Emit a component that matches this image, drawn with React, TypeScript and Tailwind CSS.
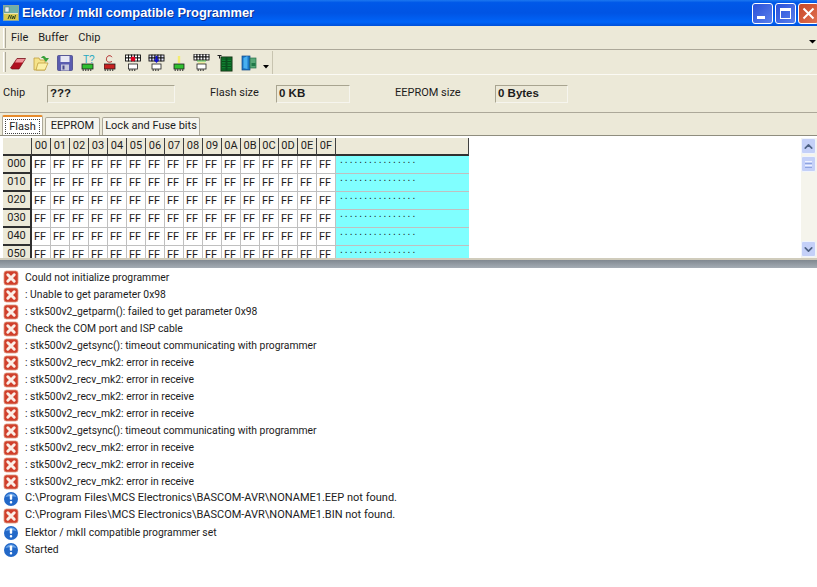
import React from 'react';
import { ChevronUp, ChevronDown } from 'lucide-react';

const hexCols = ['00','01','02','03','04','05','06','07','08','09','0A','0B','0C','0D','0E','0F'];
const rowLabels = ['000','010','020','030','040','050'];

const logLines: [string, string][] = [
  ['err', 'Could not initialize programmer'],
  ['err', ': Unable to get parameter 0x98'],
  ['err', ': stk500v2_getparm(): failed to get parameter 0x98'],
  ['err', 'Check the COM port and ISP cable'],
  ['err', ': stk500v2_getsync(): timeout communicating with programmer'],
  ['err', ': stk500v2_recv_mk2: error in receive'],
  ['err', ': stk500v2_recv_mk2: error in receive'],
  ['err', ': stk500v2_recv_mk2: error in receive'],
  ['err', ': stk500v2_recv_mk2: error in receive'],
  ['err', ': stk500v2_getsync(): timeout communicating with programmer'],
  ['err', ': stk500v2_recv_mk2: error in receive'],
  ['err', ': stk500v2_recv_mk2: error in receive'],
  ['err', ': stk500v2_recv_mk2: error in receive'],
  ['info', 'C:\\Program Files\\MCS Electronics\\BASCOM-AVR\\NONAME1.EEP not found.'],
  ['err', 'C:\\Program Files\\MCS Electronics\\BASCOM-AVR\\NONAME1.BIN not found.'],
  ['info', 'Elektor / mkII compatible programmer set'],
  ['info', 'Started'],
];

function ErrIcon() {
  return (
    <svg width="16" height="16" viewBox="0 0 16 16" className="shrink-0">
      <rect x="1" y="1" width="14" height="14" rx="2.5" fill="#d0402c" />
      <rect x="1" y="1" width="14" height="14" rx="2.5" fill="none" stroke="#e09a80" strokeWidth="0.8" />
      <path d="M4.8 4.8l6.4 6.4M11.2 4.8l-6.4 6.4" stroke="#fbeee6" strokeWidth="3" strokeLinecap="round" />
    </svg>
  );
}

function InfoIcon() {
  return (
    <svg width="16" height="16" viewBox="0 0 16 16" className="shrink-0">
      <circle cx="8" cy="8" r="7" fill="#2268c8" />
      <path d="M2.5 6a6 6 0 0 1 11 0a12 6 0 0 0-11 0z" fill="#6aa4e8" />
      <rect x="6.8" y="3.4" width="2.4" height="5.4" rx="0.8" fill="#fff" />
      <rect x="6.8" y="10" width="2.4" height="2.4" rx="1" fill="#fff" />
    </svg>
  );
}

function AppIcon() {
  return (
    <svg width="16" height="16" viewBox="0 0 16 16" className="shrink-0">
      <rect x="0.5" y="0.5" width="15" height="15" fill="#e8e4b8" stroke="#8aa8a0" />
      <rect x="1" y="1" width="14" height="7" fill="#70b0a8" />
      <rect x="2" y="2" width="4" height="5" fill="#e8f0f0" stroke="#607070" strokeWidth="0.5" />
      <rect x="1" y="9" width="14" height="6" fill="#d8c850" />
      <path d="M5 14l1.5-4 1.5 4M8.5 10l1 4 1-3 1 3 1-4" stroke="#28401c" strokeWidth="0.9" fill="none" />
    </svg>
  );
}

function Chip({ x, y, w, fill }: { x: number; y: number; w: number; fill: string }) {
  return (
    <g>
      <rect x={x} y={y} width={w} height="5" fill={fill} stroke="#202020" strokeWidth="0.8" />
      {Array.from({ length: Math.floor(w / 2.5) }).map((_, i) => (
        <rect key={i} x={x + 0.6 + i * 2.5} y={y + 5.4} width="1.2" height="1.4" fill="#202020" />
      ))}
    </g>
  );
}

function MiniGrid({ x, y, fill = '#fff' }: { x: number; y: number; fill?: string }) {
  return (
    <g stroke="#101010" strokeWidth="0.9" fill={fill}>
      {[0, 1, 2, 3, 4].map((c) =>
        [0, 1].map((r) => <rect key={`${c}${r}`} x={x + c * 3} y={y + r * 3} width="3" height="3" />)
      )}
    </g>
  );
}

function ToolIcon({ w, children }: { w: number; children: React.ReactNode }) {
  return (
    <svg width={w} height="18" viewBox={`0 0 ${w} 18`} className="shrink-0">
      {children}
    </svg>
  );
}

function Toolbar() {
  return (
    <div className="flex h-[25px] items-center border-b border-[#fbfaf4]">
      <div className="flex h-[23px] w-[273px] items-center border-r border-[#c8c4b0] pl-[3px]">
        <div className="h-[20px] w-[3px] border-l border-r border-l-white border-r-[#aca899]" />
        <div className="ml-[4px] mt-[2px] flex items-center gap-[7px]">
          {/* eraser */}
          <ToolIcon w={16}>
            <path d="M0.5 14L7 4.5h8.5L9 15H2z" fill="#b01020" stroke="#701018" strokeWidth="0.7" />
            <path d="M7 5h8L12.5 8.5H5z" fill="#f09098" />
          </ToolIcon>
          {/* open */}
          <ToolIcon w={17}>
            <path d="M1 4h5l1 2h5v10H1z" fill="#f6e38a" stroke="#c0a040" strokeWidth="0.8" />
            <path d="M3 16l2-7h10l-3 7z" fill="#fbf0a8" stroke="#c0a040" strokeWidth="0.8" />
            <path d="M8 4c2-3 4-2 5 0h3l-3 4L10 4z" fill="#38a038" />
          </ToolIcon>
          {/* save */}
          <ToolIcon w={17}>
            <rect x="0.5" y="1.5" width="15" height="15" rx="1" fill="#5a5cb0" stroke="#48488c" strokeWidth="0.8" />
            <rect x="3.5" y="2" width="9" height="6" fill="#e8e8f4" />
            <rect x="4" y="10.5" width="8" height="6" fill="#c8c8dc" />
            <rect x="5.5" y="11.5" width="2" height="4" fill="#48488c" />
          </ToolIcon>
          {/* T? */}
          <ToolIcon w={16}>
            <text x="2" y="9" fontSize="10" fontFamily="Liberation Sans, sans-serif" fill="#28a8c0">T?</text>
            <Chip x={1} y={10} w={11} fill="#30c030" />
          </ToolIcon>
          {/* C */}
          <ToolIcon w={14}>
            <path d="M8 3.2C7 1 3 1 2.5 4.5S5 9 8 7.5" fill="none" stroke="#b02828" strokeWidth="1" />
            <Chip x={0} y={10} w={11} fill="#c82020" />
          </ToolIcon>
          {/* read flash */}
          <ToolIcon w={16}>
            <MiniGrid x={0.5} y={1} />
            <path d="M8 3.5v3" stroke="#e00020" strokeWidth="1.5" />
            <circle cx="8" cy="5" r="2.4" fill="#e00020" />
            <Chip x={3.5} y={10} w={9} fill="#ffffff" />
          </ToolIcon>
          {/* write flash */}
          <ToolIcon w={18}>
            <MiniGrid x={1} y={1} fill="#e8e8ff" />
            <path d="M8.5 2v4" stroke="#1010d0" strokeWidth="2" />
            <path d="M5.5 5.5h6l-3 3.5z" fill="#1010d0" />
            <Chip x={4} y={10} w={9} fill="#ffffff" />
          </ToolIcon>
          {/* verify */}
          <ToolIcon w={13}>
            <path d="M6 2v7" stroke="#f4ec70" strokeWidth="2.4" />
            <Chip x={1} y={10} w={10} fill="#30c030" />
          </ToolIcon>
          {/* compare */}
          <ToolIcon w={17}>
            <MiniGrid x={1} y={0} />
            <path d="M4 7h9" stroke="#50c850" strokeWidth="1" />
            <path d="M5 9h7" stroke="#f0ec70" strokeWidth="1" />
            <Chip x={4} y={10} w={9} fill="#ffffff" />
          </ToolIcon>
          {/* ram chip */}
          <ToolIcon w={17}>
            <path d="M0.5 1.5h4M2.5 1.5v3" stroke="#202020" strokeWidth="1" />
            <rect x="4" y="3" width="11" height="14" fill="#108030" stroke="#103010" />
            <path d="M5 5h9M5 7.5h9M5 10h9M5 12.5h9M5 15h9" stroke="#0a4818" strokeWidth="0.9" />
            <rect x="8.5" y="3" width="2" height="14" fill="#0a5020" />
          </ToolIcon>
          {/* exit door */}
          <ToolIcon w={16}>
            <rect x="1" y="2" width="8" height="14" fill="#1c78c8" stroke="#104888" strokeWidth="0.7" />
            <path d="M2.5 4l4-2v13l-4-1z" fill="#48b0f0" />
            <rect x="9" y="4" width="6" height="10" fill="#58a878" stroke="#287048" strokeWidth="0.7" />
            <rect x="10.5" y="9" width="4" height="3" fill="#207848" />
          </ToolIcon>
        </div>
        <svg width="6" height="4" viewBox="0 0 6 4" className="ml-[6px] mt-[10px]">
          <path d="M0 0h6L3 3.5z" fill="#000" />
        </svg>
      </div>
    </div>
  );
}

function InfoField({ w, children }: { w: string; children: React.ReactNode }) {
  return (
    <div className={`flex h-[18px] items-center border border-b-[#f6f5ee] border-l-[#a8a490] border-r-[#f6f5ee] border-t-[#a8a490] pl-[2px] font-['Liberation_Sans',sans-serif] text-[11.5px] font-bold ${w}`}>
      {children}
    </div>
  );
}

function HeaderCell({ children, w }: { children?: React.ReactNode; w: string }) {
  return (
    <div className={`flex h-[18px] items-center justify-center border-b-2 border-r border-b-[#303030] border-r-[#404040] bg-[#ece9d8] pt-px ${w}`}>
      {children}
    </div>
  );
}

function ScrollBtn({ children }: { children: React.ReactNode }) {
  return (
    <div className="flex h-[16px] w-[15px] items-center justify-center rounded-[2px] border border-[#f0f4fc] bg-[#c4d0f8] text-[#4d6185]">
      {children}
    </div>
  );
}

export default function App() {
  return (
    <div className="flex h-[587px] w-[817px] flex-col overflow-hidden bg-white font-['Roboto',sans-serif] text-[11px] text-[#1c1c1c]">
      {/* title bar */}
      <div className="flex h-[26px] items-center bg-[linear-gradient(180deg,#1c78f0_0%,#0058e8_10%,#0054e4_50%,#0064f8_85%,#0050d8_100%)] pl-[3px]">
        <AppIcon />
        <div className="ml-[3px] font-['Liberation_Sans',sans-serif] text-[12.9px] font-bold text-white [text-shadow:1px_1px_0_#0f2f90]">
          Elektor / mkII compatible Programmer
        </div>
        <div className="ml-auto -mr-[2px] flex gap-[2px]">
          <div className="flex h-[21px] w-[21px] items-end justify-start rounded-[3px] border border-white bg-[linear-gradient(135deg,#2a50d8,#5a80ec)] pb-[4px] pl-[4px]">
            <div className="h-[3px] w-[8px] bg-white" />
          </div>
          <div className="flex h-[21px] w-[21px] items-center justify-center rounded-[3px] border border-white bg-[linear-gradient(135deg,#2a50d8,#5a80ec)]">
            <div className="h-[11px] w-[11px] border border-t-[3px] border-white" />
          </div>
          <div className="flex h-[21px] w-[21px] items-center justify-center rounded-[3px] border border-white bg-[linear-gradient(135deg,#c84828,#e07050)]">
            <svg width="13" height="13" viewBox="0 0 13 13">
              <path d="M1.5 1.5l10 10M11.5 1.5l-10 10" stroke="#fff" strokeWidth="2" />
            </svg>
          </div>
        </div>
      </div>

      {/* menu */}
      <div className="flex h-[24px] items-center border-b border-b-[#aca899] bg-[#ece9d8] pl-[3px] pr-[1px]">
        <div className="h-[20px] w-[3px] border-l border-r border-l-white border-r-[#aca899]" />
        <div className="ml-[5px] mt-[2px] flex gap-[10px]">
          <span>File</span>
          <span>Buffer</span>
          <span>Chip</span>
        </div>
        <svg width="7" height="4" viewBox="0 0 7 4" className="ml-auto mt-[8px]">
          <path d="M0 0h7L3.5 3.5z" fill="#000" />
        </svg>
      </div>

      <div className="bg-[#ece9d8]">
        <Toolbar />
      </div>

      {/* chip info */}
      <div className="flex h-[38px] items-center border-b border-b-[#aca899] bg-[#ece9d8] pl-[3px]">
        <span className="w-[44px]">Chip</span>
        <InfoField w="w-[128px]">???</InfoField>
        <span className="ml-[35px] w-[66px]">Flash size</span>
        <InfoField w="w-[74px]">0 KB</InfoField>
        <span className="ml-[45px] w-[100px]">EEPROM size</span>
        <InfoField w="w-[73px]">0 Bytes</InfoField>
      </div>

      {/* tabs */}
      <div className="flex h-[23px] items-end gap-[2px] border-b border-b-[#8f8d7e] bg-[#ece9d8] pl-[2px]">
        <div className="flex h-[20px] w-[41px] items-center justify-center rounded-t-[2px] border-x border-t-2 border-x-[#aca899] border-t-[#e68b2c] bg-white">
          <span className="border border-dotted border-[#404040] px-[3px] leading-[13px]">Flash</span>
        </div>
        <div className="flex h-[18px] w-[55px] items-center justify-center whitespace-nowrap rounded-t-[2px] border-x border-t border-[#aca899] bg-[#f6f5ee]">EEPROM</div>
        <div className="flex h-[18px] w-[98px] items-center justify-center whitespace-nowrap rounded-t-[2px] border-x border-t border-[#aca899] bg-[#f6f5ee]">Lock and Fuse bits</div>
      </div>

      {/* hex grid */}
      <div className="flex h-[122px] bg-white pt-[2px]">
        <div className="w-[801px] overflow-hidden pl-[3px]">
          <div className="flex w-[466px]">
            <HeaderCell w="w-[29px]" />
            {hexCols.map((c) => (
              <HeaderCell key={c} w="w-[19px]">{c}</HeaderCell>
            ))}
            <HeaderCell w="w-[133px]" />
          </div>
          {rowLabels.map((r) => (
            <div key={r} className="flex w-[466px]">
              <div className="flex h-[18px] w-[29px] items-center justify-center border-b-2 border-r-2 border-b-[#303030] border-r-[#303030] bg-[#ece9d8] pt-px">{r}</div>
              {hexCols.map((c) => (
                <div key={c} className="flex h-[18px] w-[19px] items-center border-b border-r border-[#c0c0c0] pl-[2px] pt-px">FF</div>
              ))}
              <div className="h-[18px] w-[133px] border-b border-b-[#c0c0c0] bg-[#80ffff] pl-[4px] font-['Liberation_Sans',sans-serif] text-[10px] leading-[8px] tracking-[2.05px]">................</div>
            </div>
          ))}
        </div>
        <div className="flex w-[16px] flex-col bg-[#f5f4ec]">
          <ScrollBtn><ChevronUp size={13} strokeWidth={3} /></ScrollBtn>
          <div className="mt-[2px] flex h-[16px] w-[15px] flex-col items-center justify-center gap-[1px] rounded-[2px] border border-[#f0f4fc] bg-[#c4d0f8]">
            <div className="h-px w-[7px] bg-[#eef2fe]" />
            <div className="h-px w-[7px] bg-[#8ea4e0]" />
            <div className="h-px w-[7px] bg-[#eef2fe]" />
            <div className="h-px w-[7px] bg-[#8ea4e0]" />
          </div>
          <div className="mt-auto mb-[1px]">
            <ScrollBtn><ChevronDown size={13} strokeWidth={3} /></ScrollBtn>
          </div>
        </div>
      </div>

      {/* splitter */}
      <div className="h-[10px] border-t-2 border-t-[#d0ccbc] bg-[linear-gradient(180deg,#808890,#a4acb4)]" />

      {/* log */}
      <div className="flex flex-col pl-[3px] pt-[1px]">
        {logLines.map(([kind, text], i) => (
          <div key={i} className="flex h-[17px] items-center gap-[6px]">
            {kind === 'err' ? <ErrIcon /> : <InfoIcon />}
            <span className={text.startsWith('C:') ? 'whitespace-nowrap text-[11px]' : 'whitespace-nowrap text-[10.35px]'}>{text}</span>
          </div>
        ))}
      </div>
    </div>
  );
}
